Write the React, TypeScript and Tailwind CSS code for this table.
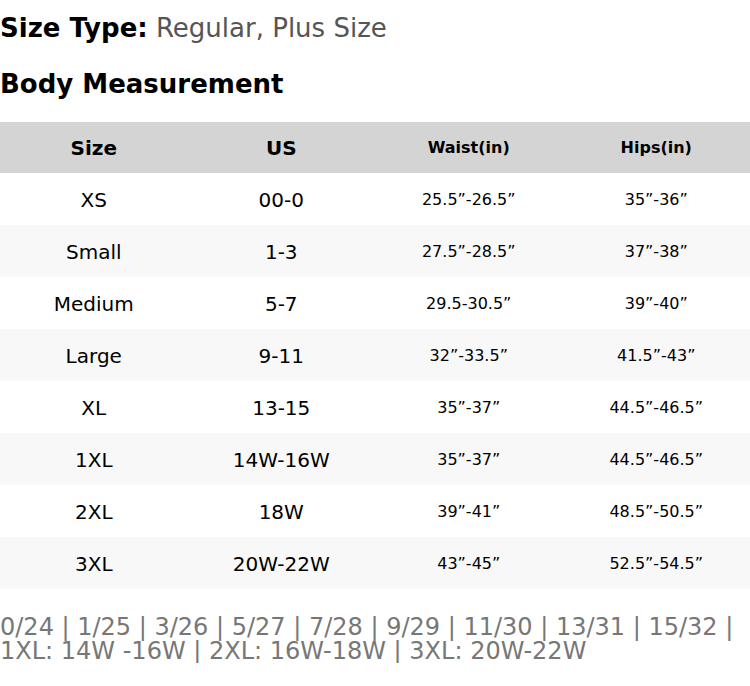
const rows = [
  ["XS", "00-0", "25.5”-26.5”", "35”-36”"],
  ["Small", "1-3", "27.5”-28.5”", "37”-38”"],
  ["Medium", "5-7", "29.5-30.5”", "39”-40”"],
  ["Large", "9-11", "32”-33.5”", "41.5”-43”"],
  ["XL", "13-15", "35”-37”", "44.5”-46.5”"],
  ["1XL", "14W-16W", "35”-37”", "44.5”-46.5”"],
  ["2XL", "18W", "39”-41”", "48.5”-50.5”"],
  ["3XL", "20W-22W", "43”-45”", "52.5”-54.5”"],
];

export default function App() {
  return (
    <div className="w-[750px] bg-white text-black font-['DejaVu_Sans',sans-serif]">
      <p className="pt-[13px] text-[26px] leading-[30px]">
        <span className="font-bold">Size Type:</span>{" "}
        <span className="text-[#555555]">Regular, Plus Size</span>
      </p>
      <h2 className="mt-[26px] text-[26px] leading-[30px] font-bold">Body Measurement</h2>

      <table className="mt-[23px] w-full table-fixed border-collapse">
        <thead>
          <tr className="h-[51px] bg-[#d4d4d4]">
            <th className="text-[20px] font-bold">Size</th>
            <th className="text-[20px] font-bold">US</th>
            <th className="text-[16px] font-bold">Waist(in)</th>
            <th className="text-[16px] font-bold">Hips(in)</th>
          </tr>
        </thead>
        <tbody>
          {rows.map((r, i) => (
            <tr key={r[0]} className={i % 2 === 1 ? "h-[52px] bg-[#f8f8f8]" : "h-[52px] bg-white"}>
              <td className="pt-[2px] text-center text-[20px]">{r[0]}</td>
              <td className="pt-[2px] text-center text-[20px]">{r[1]}</td>
              <td className="pt-[2px] text-center text-[16px]">{r[2]}</td>
              <td className="pt-[2px] text-center text-[16px]">{r[3]}</td>
            </tr>
          ))}
        </tbody>
      </table>

      <p className="mt-[26px] text-[24px] leading-[24px] text-[#777777]">
        0/24 | 1/25 | 3/26 | 5/27 | 7/28 | 9/29 | 11/30 | 13/31 | 15/32 | 1XL: 14W -16W | 2XL: 16W-18W | 3XL: 20W-22W
      </p>
    </div>
  );
}
